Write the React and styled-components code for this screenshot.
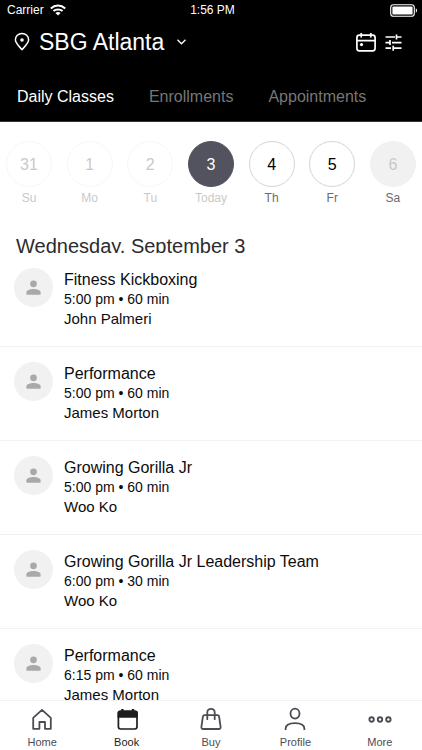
import React, { useState } from 'react';
import styled, { createGlobalStyle } from 'styled-components';

const GlobalStyle = createGlobalStyle`
  * {
    box-sizing: border-box;
  }

  body {
    margin: 0;
    background: #fff;
    color: #0c0c0e;
    font-family: Helvetica, 'Liberation Sans', Arial, sans-serif;
  }

  button {
    padding: 0;
    border: none;
    background: none;
    color: inherit;
    font: inherit;
    cursor: pointer;
  }

  svg {
    display: block;
    flex: none;
  }
`;

const Screen = styled.div`
  display: flex;
  flex-direction: column;
  height: 100vh;
  overflow: hidden;
`;

const Header = styled.header`
  flex: none;
  background: #000;
  border-bottom: 1px solid #333;
  color: #fff;
`;

const StatusBar = styled.div`
  display: grid;
  grid-template-columns: 1fr auto 1fr;
  align-items: center;
  height: 20px;
  padding: 0 4px 0 7px;
  font-size: 12px;
`;

const Carrier = styled.div`
  display: flex;
  align-items: center;
  gap: 6px;
`;

const Battery = styled.div`
  justify-self: end;
`;

const TitleBar = styled.div`
  display: flex;
  align-items: center;
  justify-content: space-between;
  height: 44px;
  padding: 0 20px 0 14px;
`;

const LocationButton = styled.button`
  display: flex;
  align-items: center;
`;

const LocationName = styled.h1`
  margin: 0 13px 0 9px;
  font-size: 23px;
  font-weight: 400;
  line-height: 28px;
`;

const Actions = styled.div`
  display: flex;
  align-items: center;
  gap: 9px;
`;

const Tabs = styled.nav`
  display: flex;
  align-items: center;
  gap: 35px;
  height: 57px;
  padding: 8px 17px 0;
`;

const Tab = styled.button`
  color: ${(props) => (props.$active ? '#fff' : '#777')};
  font-size: 16px;
  line-height: 24px;
`;

const Week = styled.div`
  display: flex;
  flex: none;
  justify-content: space-between;
  padding: 19px 6px 0;
`;

const Day = styled.button`
  display: flex;
  flex-direction: column;
  align-items: center;
  gap: 3px;
  width: 46px;
`;

const dayColors = {
  past: { border: '#f7f7f7', background: '#fff', text: '#c9c9c9', label: '#c9c9c9' },
  today: { border: '#52535e', background: '#52535e', text: '#fff', label: '#c9c9c9' },
  open: { border: '#d4d4d4', background: '#fff', text: '#000', label: '#6b6b6b' },
  empty: { border: '#f1f1f1', background: '#f1f1f1', text: '#c9c9c9', label: '#6b6b6b' },
};

const DayNumber = styled.span`
  display: flex;
  align-items: center;
  justify-content: center;
  width: 46px;
  height: 46px;
  padding-top: 1px;
  border: 1px solid ${(props) => dayColors[props.$state].border};
  border-radius: 50%;
  background: ${(props) => dayColors[props.$state].background};
  color: ${(props) => dayColors[props.$state].text};
  font-size: 16px;
`;

const DayLabel = styled.span`
  color: ${(props) => dayColors[props.$state].label};
  font-size: 12px;
  line-height: 16px;
`;

const DateHeading = styled.h2`
  flex: none;
  height: 18px;
  margin: 29px 0 0;
  padding: 0 16px;
  overflow: hidden;
  color: #2c2c2e;
  font-size: 20px;
  font-weight: 400;
  line-height: 23px;
`;

const ClassList = styled.ul`
  flex: 1;
  min-height: 0;
  margin: 0;
  padding: 0;
  overflow: hidden;
  list-style: none;
`;

const ClassRow = styled.li`
  display: flex;
  gap: 11px;
  height: 94px;
  padding: 15px 14px 0;
  border-bottom: 1px solid #f2f2f2;
`;

const Avatar = styled.div`
  display: flex;
  flex: none;
  align-items: center;
  justify-content: center;
  width: 39px;
  height: 39px;
  border-radius: 50%;
  background: #f1f1f1;
`;

const ClassInfo = styled.div`
  display: flex;
  flex-direction: column;
  padding-top: 2px;
`;

const ClassName = styled.h3`
  margin: 0;
  font-size: 16px;
  font-weight: 400;
  line-height: 20px;
`;

const ClassTime = styled.p`
  margin: 0;
  font-size: 14px;
  line-height: 19px;
`;

const Instructor = styled.p`
  margin: 0;
  font-size: 15px;
  line-height: 19px;
`;

const TabBar = styled.nav`
  display: flex;
  flex: none;
  height: 50px;
  border-top: 1px solid #f2f2f2;
  background: #fff;
`;

const TabBarItem = styled.button`
  display: flex;
  flex: 1;
  flex-direction: column;
  align-items: center;
  gap: 4px;
  padding-top: 6px;
  color: ${(props) => (props.$active ? '#1d1d20' : '#4b4c54')};
  font-size: 11px;
  line-height: 14px;
`;

const days = [
  { number: 31, label: 'Su', state: 'past' },
  { number: 1, label: 'Mo', state: 'past' },
  { number: 2, label: 'Tu', state: 'past' },
  { number: 3, label: 'Today', state: 'today' },
  { number: 4, label: 'Th', state: 'open' },
  { number: 5, label: 'Fr', state: 'open' },
  { number: 6, label: 'Sa', state: 'empty' },
];

const classes = [
  { name: 'Fitness Kickboxing', time: '5:00 pm • 60 min', coach: 'John Palmeri' },
  { name: 'Performance', time: '5:00 pm • 60 min', coach: 'James Morton' },
  { name: 'Growing Gorilla Jr', time: '5:00 pm • 60 min', coach: 'Woo Ko' },
  { name: 'Growing Gorilla Jr Leadership Team', time: '6:00 pm • 30 min', coach: 'Woo Ko' },
  { name: 'Performance', time: '6:15 pm • 60 min', coach: 'James Morton' },
];

const WifiIcon = () => (
  <svg width="16" height="12" viewBox="0 0 16 12" fill="none" stroke="#fff" strokeWidth="2">
    <path d="M0.8 4.4C4.9 0.6 11.1 0.6 15.2 4.4" />
    <path d="M3.4 7.1C6 4.8 10 4.8 12.6 7.1" />
    <path d="M8 11.6L5.4 9C6.8 7.7 9.2 7.7 10.6 9Z" fill="#fff" stroke="none" />
  </svg>
);

const BatteryIcon = () => (
  <svg width="28" height="13" viewBox="0 0 28 13" fill="none">
    <rect x="0.7" y="0.7" width="23.6" height="11.6" rx="2.8" stroke="#fff" strokeWidth="1.1" />
    <rect x="2.4" y="2.4" width="20.2" height="8.2" rx="1.2" fill="#fff" />
    <path d="M25.8 4.3C27.6 5 27.6 8 25.8 8.7Z" fill="#fff" />
  </svg>
);

const PinIcon = () => (
  <svg width="16" height="20" viewBox="0 0 16 20" fill="none" stroke="#fff" strokeWidth="1.5">
    <path d="M8 17.6C5.2 14.4 1.4 11.3 1.4 7.8C1.4 4.2 4.3 1.5 8 1.5C11.7 1.5 14.6 4.2 14.6 7.8C14.6 11.3 10.8 14.4 8 17.6Z" />
    <circle cx="8" cy="8" r="1.8" fill="#fff" stroke="none" />
  </svg>
);

const ChevronIcon = () => (
  <svg width="9" height="6" viewBox="0 0 9 6" fill="none" stroke="#fff" strokeWidth="1.3">
    <path d="M0.5 0.8L4.5 4.8L8.5 0.8" />
  </svg>
);

const CalendarIcon = () => (
  <svg width="20" height="20" viewBox="0 0 20 20" fill="none" stroke="#fff" strokeWidth="1.7">
    <rect x="0.9" y="3.2" width="18.2" height="15.6" rx="2.5" />
    <path d="M1 8.7H19M5.2 1V5.4M14.8 1V5.4" />
    <circle cx="5.5" cy="12.6" r="1.6" fill="#fff" stroke="none" />
  </svg>
);

const FiltersIcon = () => (
  <svg width="17" height="17" viewBox="0 0 17 17" fill="none" stroke="#fff" strokeWidth="1.7">
    <path d="M0.5 3H10M11.5 3H16.5M11.5 0.5V5.5" />
    <path d="M0.5 8.6H4.8M7 8.6H16.5M5 6.1V11.1" />
    <path d="M0.5 14.2H6M8.2 14.2H16.5M8.2 11.7V16.7" />
  </svg>
);

const PersonIcon = () => (
  <svg width="15" height="15" viewBox="0 0 16 16" fill="#a9a9a9">
    <circle cx="8" cy="4.1" r="3.6" />
    <path d="M0.4 15V13.1C0.4 10.8 4.5 9.5 8 9.5C11.5 9.5 15.6 10.8 15.6 13.1V15Q15.6 15.6 15 15.6H1Q0.4 15.6 0.4 15Z" />
  </svg>
);

const navIcons = {
  Home: (
    <svg width="24" height="24" viewBox="0 0 24 24" fill="none" stroke="currentColor" strokeWidth="1.8" strokeLinejoin="round">
      <path d="M3.2 10.8L12 2.9L20.8 10.8V21.8H15V15H9.4V21.8H3.2Z" />
    </svg>
  ),
  Book: (
    <svg width="24" height="24" viewBox="0 0 24 24" fill="none" stroke="currentColor" strokeWidth="1.7">
      <rect x="3.4" y="4.4" width="18.6" height="17.6" rx="2.2" />
      <path d="M3.4 10V5.9Q3.4 4.4 5.4 4.4H20Q22 4.4 22 5.9V10Z" fill="currentColor" />
      <path d="M7.4 2V5.6M18 2V5.6" strokeWidth="2.4" />
    </svg>
  ),
  Buy: (
    <svg width="24" height="24" viewBox="0 0 24 24" fill="none" stroke="currentColor" strokeWidth="1.8" strokeLinecap="round" strokeLinejoin="round">
      <path d="M5.5 8.2H18.5Q19.9 8.2 20.1 9.6L21.6 19.9Q21.8 22 19.8 22H4.2Q2.2 22 2.4 19.9L3.9 9.6Q4.1 8.2 5.5 8.2Z" />
      <path d="M8.3 12.2V5.6C8.3 0.6 15.7 0.6 15.7 5.6V12.2" />
    </svg>
  ),
  Profile: (
    <svg width="24" height="24" viewBox="0 0 24 24" fill="none" stroke="currentColor" strokeWidth="1.8">
      <ellipse cx="12" cy="6.6" rx="4.5" ry="5" />
      <path d="M2.6 23.1V21.8C2.6 17.6 7 16.2 12 16.2S21.4 17.6 21.4 21.8V23.1" />
    </svg>
  ),
  More: (
    <svg width="24" height="24" viewBox="0 0 24 24" fill="none" stroke="currentColor" strokeWidth="1.9">
      <circle cx="3.6" cy="12.5" r="2.2" />
      <circle cx="12" cy="12.5" r="2.2" />
      <circle cx="20.4" cy="12.5" r="2.2" />
    </svg>
  ),
};

const App = () => {
  const [tab, setTab] = useState('Daily Classes');
  const [page, setPage] = useState('Book');

  return (
    <Screen>
      <GlobalStyle />
      <Header>
        <StatusBar>
          <Carrier>
            Carrier
            <WifiIcon />
          </Carrier>
          <span>1:56 PM</span>
          <Battery>
            <BatteryIcon />
          </Battery>
        </StatusBar>
        <TitleBar>
          <LocationButton>
            <PinIcon />
            <LocationName>SBG Atlanta</LocationName>
            <ChevronIcon />
          </LocationButton>
          <Actions>
            <button aria-label="Calendar">
              <CalendarIcon />
            </button>
            <button aria-label="Filters">
              <FiltersIcon />
            </button>
          </Actions>
        </TitleBar>
        <Tabs>
          {['Daily Classes', 'Enrollments', 'Appointments'].map((name) => (
            <Tab key={name} $active={tab === name} onClick={() => setTab(name)}>
              {name}
            </Tab>
          ))}
        </Tabs>
      </Header>
      <Week>
        {days.map((day) => (
          <Day key={day.number}>
            <DayNumber $state={day.state}>{day.number}</DayNumber>
            <DayLabel $state={day.state}>{day.label}</DayLabel>
          </Day>
        ))}
      </Week>
      <DateHeading>Wednesday, September 3</DateHeading>
      <ClassList>
        {classes.map((item, index) => (
          <ClassRow key={index}>
            <Avatar>
              <PersonIcon />
            </Avatar>
            <ClassInfo>
              <ClassName>{item.name}</ClassName>
              <ClassTime>{item.time}</ClassTime>
              <Instructor>{item.coach}</Instructor>
            </ClassInfo>
          </ClassRow>
        ))}
      </ClassList>
      <TabBar>
        {Object.keys(navIcons).map((name) => (
          <TabBarItem key={name} $active={page === name} onClick={() => setPage(name)}>
            {navIcons[name]}
            {name}
          </TabBarItem>
        ))}
      </TabBar>
    </Screen>
  );
};

export default App;
